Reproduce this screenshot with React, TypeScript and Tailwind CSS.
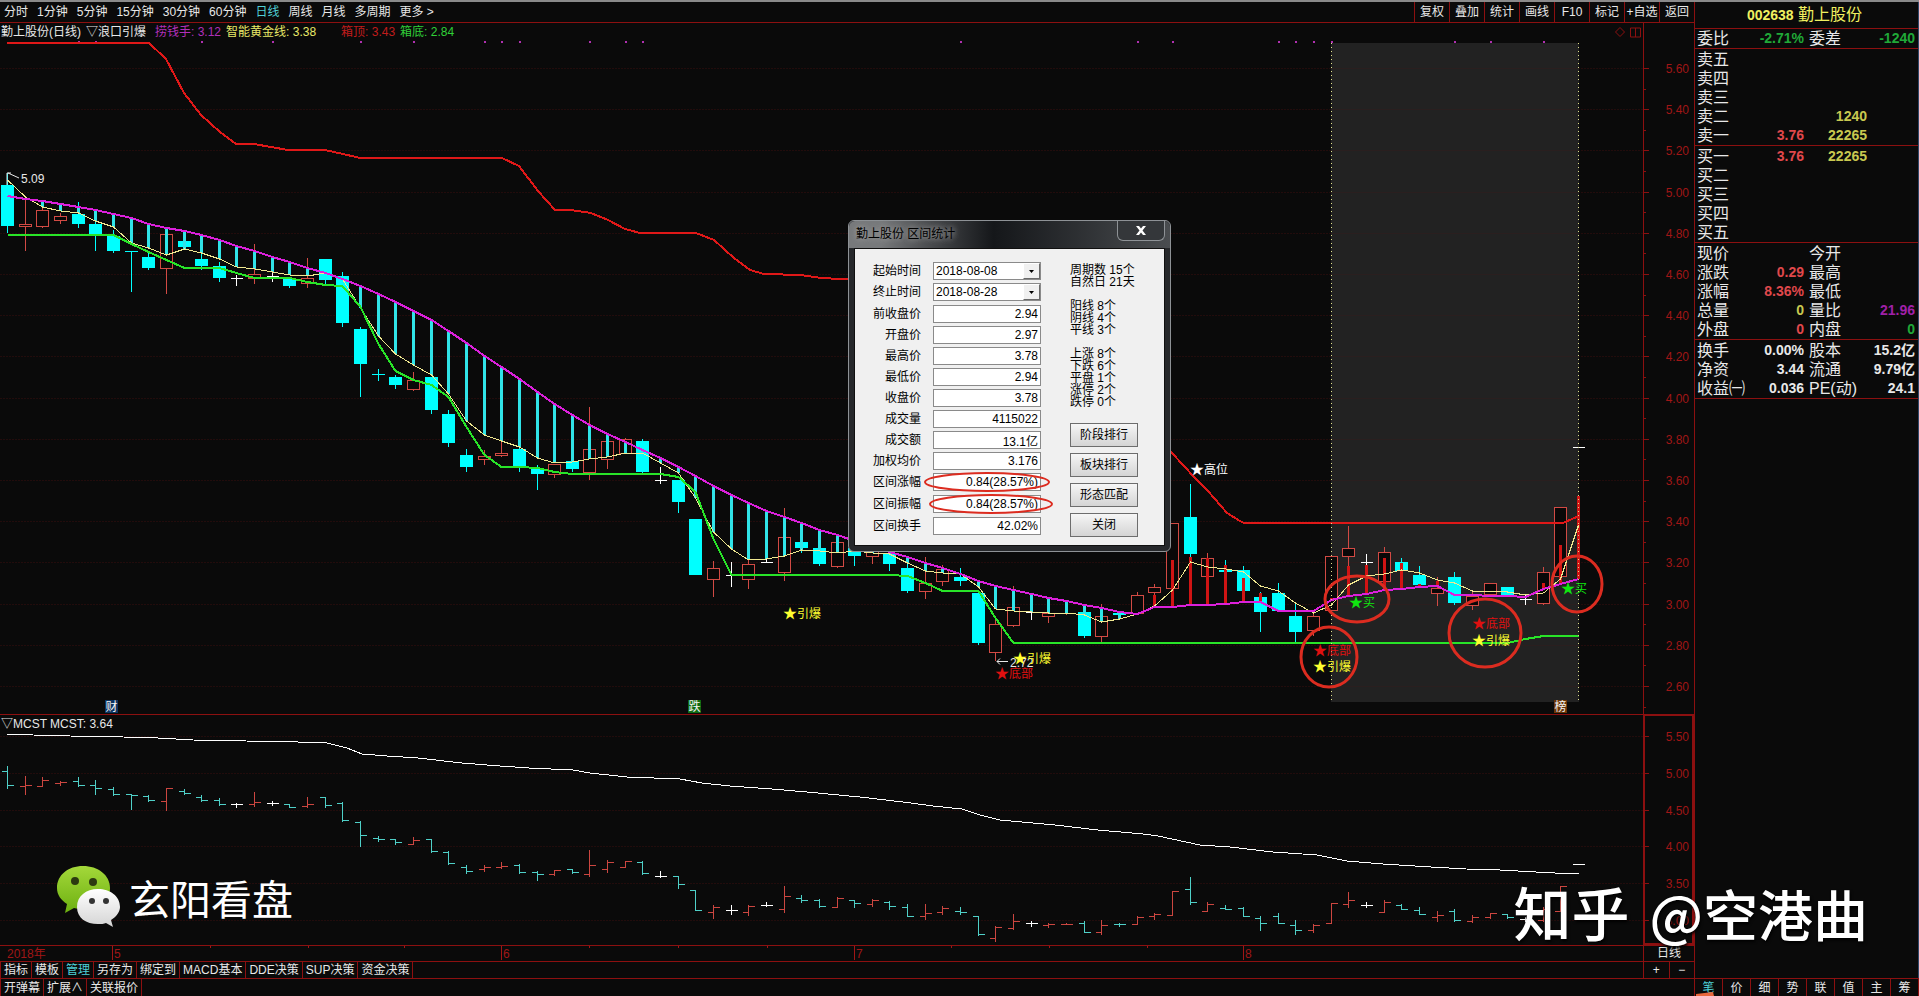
import { Fragment } from 'react/jsx-runtime';

type Kind = 'up' | 'down' | 'flat';
type Candle = [Kind, number, number, number, number];

// kind, body top, body bottom, high, low (in chart units)
const CANDLES: Candle[] = [
  ['down', 185, 226, 173, 233], ['up', 224, 227, 200, 251], ['up', 210, 227, 204, 228], ['up', 216, 221, 213, 224],
  ['down', 214, 224, 202, 228], ['down', 224, 235, 210, 251], ['down', 236, 251, 230, 253], ['down', 251, 252, 251, 292],
  ['down', 257, 268, 252, 270], ['up', 234, 269, 234, 294], ['down', 241, 247, 237, 250], ['down', 259, 266, 254, 270],
  ['down', 266, 278, 262, 282], ['flat', 278, 278, 275, 286], ['up', 274, 279, 244, 284], ['flat', 276, 276, 271, 282],
  ['down', 279, 286, 279, 288], ['up', 278, 284, 258, 288], ['down', 259, 280, 259, 286], ['down', 276, 323, 272, 327],
  ['down', 329, 364, 327, 397], ['down', 374, 375, 369, 381], ['down', 377, 385, 375, 389], ['up', 380, 390, 372, 391],
  ['down', 377, 410, 377, 414], ['down', 414, 443, 410, 447], ['down', 455, 467, 449, 472], ['up', 456, 460, 450, 465],
  ['up', 453, 456, 441, 457], ['down', 449, 468, 447, 472], ['down', 469, 474, 465, 490], ['up', 464, 475, 464, 478],
  ['down', 461, 469, 461, 472], ['up', 449, 473, 407, 480], ['up', 441, 460, 436, 469], ['up', 439, 454, 438, 454],
  ['down', 441, 472, 439, 475], ['flat', 480, 480, 467, 484], ['down', 480, 502, 480, 513], ['down', 519, 575, 519, 575],
  ['up', 568, 580, 561, 597], ['flat', 575, 575, 562, 587], ['up', 564, 580, 560, 589], ['flat', 562, 562, 553, 563],
  ['up', 537, 573, 508, 581], ['down', 542, 548, 533, 553], ['down', 548, 564, 545, 566], ['up', 542, 567, 540, 568],
  ['down', 548, 556, 546, 566], ['up', 547, 557, 544, 564], ['down', 553, 564, 550, 571], ['down', 568, 591, 557, 593],
  ['up', 583, 592, 557, 599], ['up', 569, 582, 565, 586], ['down', 577, 581, 568, 586], ['down', 593, 643, 591, 645],
  ['up', 624, 653, 619, 661], ['up', 607, 626, 586, 627], ['flat', 612, 612, 607, 620], ['up', 613, 617, 611, 623],
  ['up', 613, 614, 612, 615], ['down', 612, 636, 605, 638], ['up', 616, 637, 604, 642], ['down', 613, 615, 611, 620],
  ['up', 595, 614, 592, 615], ['up', 587, 593, 584, 600], ['up', 523, 589, 523, 590], ['down', 517, 554, 484, 557],
  ['up', 558, 577, 553, 579], ['down', 570, 572, 560, 572], ['down', 570, 591, 566, 592], ['down', 597, 612, 592, 632],
  ['down', 593, 611, 583, 612], ['down', 616, 632, 604, 642], ['up', 616, 631, 614, 636], ['up', 556, 611, 556, 611],
  ['up', 548, 557, 526, 566], ['flat', 562, 562, 554, 566], ['up', 552, 582, 547, 582], ['down', 562, 571, 558, 571],
  ['down', 575, 585, 566, 585], ['up', 588, 594, 577, 606], ['down', 577, 603, 572, 605], ['up', 596, 606, 590, 610],
  ['up', 583, 595, 583, 597], ['down', 587, 596, 587, 597], ['flat', 599, 599, 594, 605], ['up', 572, 604, 567, 605],
  ['up', 507, 577, 507, 577], ['flat', 447, 447, 447, 447],
];

const SLOW = [
  196, 199, 201, 204, 207, 210, 214, 218, 224, 228, 231, 235, 240, 246, 251, 257, 262, 268, 273, 279, 286, 294, 302,
  311, 320, 331, 343, 356, 367, 379, 392, 404, 415, 425, 434, 442, 450, 458, 467, 476, 486, 495, 503, 511, 517, 523,
  530, 535, 541, 546, 552, 557, 563, 568, 574, 581, 586, 590, 594, 598, 601, 605, 608, 612, 614, 607, 607, 605, 605,
  604, 602, 602, 611, 611, 611, 600, 596, 594, 590, 589, 587, 586, 595, 595, 596, 596, 597, 589, 584, 579,
];

const FAST = [
  180, 197, 207, 211, 213, 221, 227, 243, 248, 255, 249, 253, 259, 267, 269, 272, 275, 276, 273, 279, 308, 336, 354,
  365, 375, 394, 421, 435, 441, 447, 458, 463, 462, 459, 457, 453, 453, 463, 473, 498, 532, 549, 560, 559, 556, 550,
  551, 553, 551, 553, 554, 563, 571, 573, 574, 587, 609, 611, 612, 613, 613, 615, 622, 619, 614, 606, 590, 562, 567,
  569, 572, 586, 591, 603, 613, 605, 585, 576, 574, 570, 573, 580, 583, 591, 591, 592, 595, 593, 579, 525,
];

const FLOOR = [
  235, 235, 235, 235, 235, 235, 235, 244, 252, 260, 268, 268, 268, 273, 278, 278, 278, 282, 285, 286, 307, 344, 371,
  380, 385, 397, 427, 455, 467, 467, 468, 472, 474, 474, 474, 474, 474, 474, 477, 492, 539, 575, 575, 575, 575, 575,
  575, 575, 575, 575, 575, 576, 583, 591, 591, 591, 618, 643, 643, 643, 643, 643, 643, 643, 643, 643, 643, 643, 643,
  643, 643, 643, 643, 643, 643, 643, 643, 643, 643, 643, 643, 643, 643, 643, 643, 643, 639, 636, 636, 636,
];

const RED_STICKS: Record<number, number> = {
  65: 595, 66: 560, 67: 557, 68: 558, 69: 565, 70: 578, 71: 593, 75: 598, 76: 566, 77: 565, 78: 558, 79: 563, 80: 584,
  81: 581, 87: 583, 88: 545, 89: 496,
};

const SIGNAL_DOTS = [4, 5, 11, 15, 20, 23, 27, 28, 29, 33, 35, 36, 54, 64, 66, 72, 73, 74, 75, 82, 84, 87];

const CEILING_LEFT =
  '7,43 149,43 166,59 184,93 201,115 220,132 236,144 254,144 288,150 325,150 343,154 360,158 502,158 519,166 538,191 555,210 571,210 591,213 608,220 625,229 640,233 696,233 714,240 734,258 750,270 764,274 801,275 821,278 860,280';
const CEILING_RIGHT = '1155,434 1172,453 1195,478 1208,491 1227,513 1240,521 1244,523 1563,523 1579,516';

const MCST =
  '7,734 33,735 70,736 123,737 158,738 193,740 246,741 298,742 327,743 347,748 362,754 387,756 418,758 462,763 500,766 529,768 573,770 590,773 627,777 680,779 702,783 730,786 772,789 807,792 860,797 903,802 933,806 962,809 980,815 1000,820 1055,825 1098,830 1143,834 1158,836 1200,845 1230,847 1273,852 1317,855 1347,861 1383,864 1431,867 1466,869 1500,870 1536,872 1555,873 1579,873';

const COLORS: Record<Kind, string> = { up: '#d24a44', down: '#00ffff', flat: '#ffffff' };
const SUB_COLORS: Record<Kind, string> = { up: '#cc4640', down: '#4fd0c8', flat: '#ffffff' };

const barX = (i: number) => Math.floor(7.5 + 17.65 * i) + 0.5;
const priceY = (price: number) => Math.round(68 + (5.6 - price) * 206) + 0.5;
const subY = (y: number) => Math.round(729 + (y - 68.5) * 0.3573) + 0.5;
const toPoints = (values: number[]) => values.map((y, i) => `${barX(i)},${y}`).join(' ');

const PRICES = Array.from({ length: 16 }, (_, i) => 5.6 - i * 0.2);
const SUB_PRICES = [5.5, 5, 4.5, 4, 3.5, 3];

const MARKS: [string, number, number, string][] = [
  ['引爆', 784, 618, '#ffff30'],
  ['底部', 996, 678, '#e01010'],
  ['引爆', 1014, 663, '#ffff30'],
  ['高位', 1191, 474, '#ffffff'],
  ['买', 1350, 607, '#10e810'],
  ['底部', 1314, 655, '#e01010'],
  ['引爆', 1314, 671, '#ffff30'],
  ['底部', 1473, 628, '#e01010'],
  ['引爆', 1473, 645, '#ffff30'],
  ['买', 1562, 593, '#10e810'],
];

const RINGS = [
  [1357, 599, 32, 23],
  [1329, 657, 28, 30],
  [1485, 633, 36, 34],
  [1577, 584, 25, 28],
];

const BADGES: [string, number, string][] = [
  ['财', 105, '#0c3360'],
  ['跌', 688, '#0f6a12'],
  ['榜', 1554, '#6a3508'],
];

const PriceChart = () => (
  <svg viewBox="0 41 1694 673" className="block h-auto w-full" fontSize="12">
    {PRICES.map((price, i) => (
      <Fragment key={i}>
        <line x1="0" x2="1643" y1={priceY(price)} y2={priceY(price)} stroke="#220c0c" strokeDasharray="2 1" />
        <line x1="1643" x2="1649" y1={priceY(price)} y2={priceY(price)} stroke="#8c1010" />
        <line x1="1643" x2="1646" y1={priceY(price - 0.1)} y2={priceY(price - 0.1)} stroke="#8c1010" />
        <text x="1689" y={priceY(price) + 4} textAnchor="end" fill="#a01616">
          {price.toFixed(2)}
        </text>
      </Fragment>
    ))}
    <line x1="1643.5" x2="1643.5" y1="41" y2="714" stroke="#8c1010" />

    {/* Selected range */}
    <rect x="1331" y="43" width="248" height="659" fill="#222222" />
    {PRICES.map((price, i) => (
      <line key={i} x1="1332" x2="1578" y1={priceY(price)} y2={priceY(price)} stroke="#2a1f1f" />
    ))}

    {SIGNAL_DOTS.map((i) => (
      <rect key={i} x={barX(i) - 0.5} y="41" width="2" height="2" fill="#b030b0" />
    ))}

    {/* Candles */}
    <g shapeRendering="crispEdges">
      {CANDLES.map(([kind, top, bottom, high, low], i) => {
        const x = barX(i);
        const color = COLORS[kind];
        return (
          <Fragment key={i}>
            {low > high && <line x1={x} x2={x} y1={high} y2={low} stroke={color} />}
            {kind === 'flat' && <line x1={x - 6} x2={x + 6} y1={top + 0.5} y2={top + 0.5} stroke={color} />}
            {kind === 'down' && <rect x={x - 6.5} y={top} width="13" height={bottom - top} fill={color} />}
            {kind === 'up' && (
              <rect x={x - 6} y={top + 0.5} width="12" height={bottom - top - 1} fill="#0a0808" stroke={color} />
            )}
          </Fragment>
        );
      })}
      {SLOW.map((slow, i) => {
        const red = RED_STICKS[i];
        if (red) return <rect key={i} x={barX(i) - 1.5} y={red} width="3" height={slow - red} fill="#d01414" />;
        const fast = FAST[i];
        if (fast <= slow) return null;
        return <rect key={i} x={barX(i) - 1.5} y={slow} width="3" height={fast - slow} fill="#30e4e8" />;
      })}
    </g>

    {/* Indicator lines */}
    <g fill="none" shapeRendering="crispEdges">
      <polyline points={toPoints(FAST)} stroke="#f0e890" />
      <g strokeWidth="2">
        <polyline points={toPoints(SLOW)} stroke="#dc20dc" />
        <polyline points={toPoints(FLOOR)} stroke="#28e428" />
        <polyline points={CEILING_LEFT} stroke="#e01818" />
        <polyline points={CEILING_RIGHT} stroke="#e01818" />
      </g>
    </g>

    <line x1="1331.5" x2="1331.5" y1="43" y2="702" stroke="#e0e08c" strokeDasharray="1 3" />
    <line x1="1578.5" x2="1578.5" y1="43" y2="702" stroke="#e0e08c" strokeDasharray="1 3" />

    {/* High and low callouts */}
    <path d="M7 173v12M7 173h4M8 173l11 5" fill="none" stroke="#e8e8e8" />
    <text x="21" y="183" fill="#e8e8e8">
      5.09
    </text>
    <path d="M1008 661.500h-11m3-3l-3 3l3 3" fill="none" stroke="#e8e8e8" />
    <text x="1010" y="667" fill="#e8e8e8">
      2.72
    </text>

    {MARKS.map(([label, x, y, color], i) => (
      <text key={i} x={x - 1} y={y} fill={color}>
        <tspan fontSize="14">★</tspan>
        {label}
      </text>
    ))}
    {RINGS.map(([cx, cy, rx, ry], i) => (
      <ellipse key={i} cx={cx} cy={cy} rx={rx} ry={ry} fill="none" stroke="#dc2c20" strokeWidth="3" />
    ))}
    {BADGES.map(([label, x, color]) => (
      <Fragment key={label}>
        <rect x={x} y="700" width="13" height="13" fill={color} />
        <text x={x + 0.5} y="711" fill="#f4f4f4">
          {label}
        </text>
      </Fragment>
    ))}
  </svg>
);

const CostChart = () => (
  <svg viewBox="0 733 1694 212" className="block h-auto w-full overflow-visible" fontSize="12">
    {SUB_PRICES.map((price) => {
      const y = Math.round(736 + (5.5 - price) * 73.6) + 0.5;
      return (
        <Fragment key={price}>
          <line x1="0" x2="1643" y1={y} y2={y} stroke="#220c0c" strokeDasharray="2 1" />
          <line x1="1645" x2="1649" y1={y} y2={y} stroke="#8c1010" />
          <text x="1689" y={y + 4} textAnchor="end" fill="#a01616">
            {price.toFixed(2)}
          </text>
        </Fragment>
      );
    })}
    <path d="M1644 733v211h49v-211" fill="none" stroke="#8c1010" strokeWidth="2" />
    <g shapeRendering="crispEdges" fill="none">
      <polyline points={MCST} stroke="#ffffff" />
      {CANDLES.map(([kind, top, bottom, high, low], i) => {
        const x = barX(i);
        const open = subY(kind === 'up' ? bottom : top);
        const close = subY(kind === 'up' ? top : bottom);
        return (
          <path
            key={i}
            d={`M${x - 6} ${open}H${x}M${x} ${close}H${x + 6}M${x} ${subY(high) - 0.5}V${subY(low) + 0.5}`}
            stroke={SUB_COLORS[kind]}
          />
        );
      })}
    </g>
  </svg>
);

const MONTHS: [string, number][] = [
  ['5', 112],
  ['6', 501],
  ['7', 854],
  ['8', 1243],
];

const DateAxis = () => (
  <svg viewBox="0 946 1643 15" className="block h-auto min-w-0 flex-1" fontSize="12" fill="#a01616">
    <text x="7" y="958">
      2018年
    </text>
    {MONTHS.map(([month, x]) => (
      <Fragment key={month}>
        <rect x={x} y="946" width="1" height="14" />
        <text x={x + 2} y="958">
          {month}
        </text>
      </Fragment>
    ))}
    {[210, 308, 404, 589, 678, 767, 951, 1049, 1147].map((x) => (
      <rect key={x} x={x} y="946" width="1" height="2" />
    ))}
  </svg>
);

const PERIODS = ['分时', '1分钟', '5分钟', '15分钟', '30分钟', '60分钟', '日线', '周线', '月线', '多周期', '更多 >'];
const TOOLS = ['复权', '叠加', '统计', '画线', 'F10', '标记', '+自选', '返回'];

const Toolbar = () => (
  <nav className="flex h-[21px] items-stretch justify-between border-b border-[#8c1010] pl-1">
    <div className="flex gap-[9px]">
      {PERIODS.map((period) => (
        <button key={period} className={period === '日线' ? 'text-[#4fd0d8]' : ''}>
          {period}
        </button>
      ))}
    </div>
    <div className="flex">
      {TOOLS.map((tool) => (
        <button key={tool} className="w-[35px] border-l border-[#8c1010] whitespace-nowrap">
          {tool}
        </button>
      ))}
    </div>
  </nav>
);

const INDICATORS = ['指标', '模板', '管理', '另存为', '绑定到', 'MACD基本', 'DDE决策', 'SUP决策', '资金决策'];
const EXTRAS = ['开弹幕', '扩展∧', '关联报价'];
const SIDE_TABS = ['笔', '价', '细', '势', '联', '值', '主', '筹'];

const TabStrip = ({ tabs }: { tabs: string[] }) => (
  <div className="flex border-l border-[#8c1010]">
    {tabs.map((tab) => (
      <button
        key={tab}
        className={`border-r border-[#8c1010] px-[3px] whitespace-nowrap ${tab === '管理' ? 'text-[#4fd0d8]' : ''}`}
      >
        {tab}
      </button>
    ))}
  </div>
);

const ASKS = [
  ['卖五', '', ''],
  ['卖四', '', ''],
  ['卖三', '', ''],
  ['卖二', '', '1240'],
  ['卖一', '3.76', '22265'],
];
const BIDS = [
  ['买一', '3.76', '22265'],
  ['买二', '', ''],
  ['买三', '', ''],
  ['买四', '', ''],
  ['买五', '', ''],
];

const OrderTable = ({ rows }: { rows: string[][] }) => (
  <table className="w-full table-fixed">
    <tbody>
      {rows.map(([label, price, volume]) => (
        <tr key={label} className="h-[19px]">
          <th className="w-[50px] pl-[2px] text-left text-[16px] font-normal">{label}</th>
          <td className="w-[59px] text-right text-[#e0484c]">{price}</td>
          <td className="w-[63px] text-right text-[#c8c850]">{volume}</td>
          <td />
        </tr>
      ))}
    </tbody>
  </table>
);

type Quote = [string, string, string, string, string, string];

const RATIO: Quote[] = [['委比', '-2.71%', 'text-[#20a838]', '委差', '-1240', 'text-[#20a838]']];
const QUOTES: Quote[] = [
  ['现价', '', '', '今开', '', ''],
  ['涨跌', '0.29', 'text-[#e0484c]', '最高', '', ''],
  ['涨幅', '8.36%', 'text-[#e0484c]', '最低', '', ''],
  ['总量', '0', 'text-[#c8c850]', '量比', '21.96', 'text-[#a020a8]'],
  ['外盘', '0', 'text-[#e0484c]', '内盘', '0', 'text-[#20a838]'],
];
const BASICS: Quote[] = [
  ['换手', '0.00%', '', '股本', '15.2亿', ''],
  ['净资', '3.44', '', '流通', '9.79亿', ''],
  ['收益㈠', '0.036', '', 'PE(动)', '24.1', ''],
];

const QuoteTable = ({ rows }: { rows: Quote[] }) => (
  <table className="w-full table-fixed">
    <tbody>
      {rows.map(([label, value, color, label2, value2, color2]) => (
        <tr key={label} className="h-[19px]">
          <th className="w-[50px] pl-[2px] text-left text-[16px] font-normal whitespace-nowrap">{label}</th>
          <td className={`w-[59px] text-right ${color}`}>{value}</td>
          <th className="w-[53px] pl-[5px] text-left text-[16px] font-normal whitespace-nowrap">{label2}</th>
          <td className={`pr-[3px] text-right ${color2}`}>{value2}</td>
        </tr>
      ))}
    </tbody>
  </table>
);

const QuotePanel = () => (
  <aside className="w-[225px] shrink-0 border-r border-l border-r-[#30486a] border-l-[#8c1010] text-[14px] leading-[19px] font-bold">
    <h1 className="h-[27px] border-b border-[#8c1010] pr-1 text-center text-[16px] leading-[26px] font-normal text-[#f0f060]">
      <span className="text-[14px] font-bold">002638</span> 勤上股份
    </h1>
    <div className="border-b border-[#8c1010]">
      <QuoteTable rows={RATIO} />
    </div>
    <div className="border-b border-[#8c1010] pt-px">
      <OrderTable rows={ASKS} />
    </div>
    <div className="border-b border-[#8c1010] pt-px">
      <OrderTable rows={BIDS} />
    </div>
    <div className="border-b border-[#8c1010] pt-px">
      <QuoteTable rows={QUOTES} />
    </div>
    <div className="border-b border-[#8c1010] pt-px">
      <QuoteTable rows={BASICS} />
    </div>
  </aside>
);

const FIELDS: [string, string][][] = [
  [
    ['前收盘价', '2.94'],
    ['开盘价', '2.97'],
    ['最高价', '3.78'],
    ['最低价', '2.94'],
    ['收盘价', '3.78'],
    ['成交量', '4115022'],
    ['成交额', '13.1亿'],
    ['加权均价', '3.176'],
    ['区间涨幅', '0.84(28.57%)'],
  ],
  [['区间振幅', '0.84(28.57%)']],
  [['区间换手', '42.02%']],
];

const COUNTS = [
  ['周期数 15个', '自然日 21天'],
  ['阳线 8个', '阴线 4个', '平线 3个'],
  ['上涨 8个', '下跌 6个', '平盘 1个', '涨停 2个', '跌停 0个'],
];

const DateField = ({ label, value }: { label: string; value: string }) => (
  <label className="flex items-center justify-end gap-3">
    {label}
    <span className="relative h-[18px] w-[108px]">
      <select
        defaultValue={value}
        className="block h-full w-full appearance-none border border-[#8a8a8a] bg-white pl-[2px] leading-4 text-black"
      >
        <option>{value}</option>
      </select>
      <span className="pointer-events-none absolute top-px right-px flex h-4 w-[17px] items-center justify-center border border-t-white border-r-[#6a6a6a] border-b-[#6a6a6a] border-l-white bg-[#f0f0f0]">
        <svg viewBox="0 0 5 3" className="h-[3px] w-[5px]">
          <path d="M0 0h5L2.500 3z" fill="#000" />
        </svg>
      </span>
    </span>
  </label>
);

const RangeDialog = () => (
  <section
    role="dialog"
    aria-label="区间统计"
    className="absolute top-[218px] left-[848px] w-[323px] rounded-md border border-[#8e9296] bg-[#26282b] px-[5px] pb-[5px] text-black"
  >
    <header className="-mx-[5px] flex h-[27px] items-start justify-between rounded-t-md bg-linear-to-r from-[#77797b] from-10% via-[#15171a] via-45% to-[#4a4d50] pr-[5px] pl-[7px]">
      <h2 className="leading-[26px] [text-shadow:0_0_6px_#a0a0a0,0_0_6px_#909090]">勤上股份 区间统计</h2>
      <button
        aria-label="关闭窗口"
        className="flex h-5 w-12 items-center justify-center rounded-b-md border border-t-0 border-[#8e9296] bg-[#34373a]"
      >
        <svg viewBox="0 0 10 9" className="h-[9px] w-[10px]">
          <path d="M0 0h3l2 2.500L7 0h3L6.500 4.500L10 9H7L5 6.500L3 9H0l3.500-4.500z" fill="#fff" />
        </svg>
      </button>
    </header>
    <div className="flex border border-[#101010] bg-[#f0f0f0] pt-[13px] pb-2 pl-[18px]">
      <form className="flex w-[168px] flex-col gap-1">
        <div className="flex flex-col gap-[3px]">
          <DateField label="起始时间" value="2018-08-08" />
          <DateField label="终止时间" value="2018-08-28" />
        </div>
        {FIELDS.map((group, i) => (
          <div key={i} className="flex flex-col gap-[3px]">
            {group.map(([label, value]) => (
              <label key={label} className="flex items-center justify-end gap-3">
                {label}
                <input
                  readOnly
                  defaultValue={value}
                  className="h-[18px] w-[108px] border border-[#8a8a8a] bg-white pr-[2px] text-right"
                />
              </label>
            ))}
          </div>
        ))}
      </form>
      <div className="ml-[29px] flex flex-col">
        <div className="flex flex-col gap-3 pt-[2px] leading-3">
          {COUNTS.map((group, i) => (
            <ul key={i}>
              {group.map((line) => (
                <li key={line}>{line}</li>
              ))}
            </ul>
          ))}
        </div>
        <div className="mt-[15px] flex flex-col gap-[6px]">
          {['阶段排行', '板块排行', '形态匹配', '关闭'].map((action) => (
            <button
              key={action}
              className="h-6 w-[68px] border border-[#6d6d6d] bg-linear-to-b from-[#f6f6f6] to-[#d4d4d4]"
            >
              {action}
            </button>
          ))}
        </div>
      </div>
    </div>
    <svg viewBox="0 0 323 332" className="pointer-events-none absolute -top-px -left-px h-[332px] w-[323px]">
      <ellipse cx="139" cy="262" rx="62" ry="9" fill="none" stroke="#dc2c20" strokeWidth="2" />
      <ellipse cx="143" cy="284" rx="61" ry="9" fill="none" stroke="#dc2c20" strokeWidth="2" />
    </svg>
  </section>
);

const WechatMark = () => (
  <div className="absolute bottom-[69px] left-[57px] flex items-end gap-[9px]">
    <svg viewBox="0 0 63 61" className="h-[61px] w-[63px]">
      <defs>
        <linearGradient id="leaf" x1="0" y1="0" x2="0" y2="1">
          <stop offset="0" stopColor="#a4d83a" />
          <stop offset="1" stopColor="#6cb010" />
        </linearGradient>
        <linearGradient id="pearl" x1="0" y1="0" x2="0" y2="1">
          <stop offset="0" stopColor="#ffffff" />
          <stop offset="1" stopColor="#d4d4d4" />
        </linearGradient>
      </defs>
      <path d="M26 0C11 0 0 9 0 22c0 7 4 12 10 16l-2 9 9-5c3 1 6 1 9 1 15 0 27-8 27-21S41 0 26 0z" fill="url(#leaf)" />
      <circle cx="18" cy="15" r="4" fill="#2c3a10" />
      <circle cx="36" cy="16" r="4" fill="#2c3a10" />
      <path
        d="M41 23c-12 0-21 7-21 18s9 17 21 17c3 0 6 0 8-1l7 4-2-7c5-3 9-8 9-13 0-11-10-18-22-18z"
        fill="url(#pearl)"
      />
      <circle cx="35" cy="35" r="3" fill="#333" />
      <circle cx="49" cy="35" r="3" fill="#333" />
    </svg>
    <span className="text-[41px] leading-[52px] text-white">玄阳看盘</span>
  </div>
);

const ZhihuMark = () => (
  <div className="absolute right-[51px] bottom-12 flex items-end gap-5 font-medium text-white [text-shadow:1px_2px_3px_#000]">
    <span className="text-[58px] leading-[64px]">知乎</span>
    <span className="text-[55px] leading-[72px] font-['Noto_Sans_CJK_SC',sans-serif]">@空港曲</span>
  </div>
);

export default function App() {
  return (
    <div className="relative flex min-h-screen flex-col border-t-2 border-[#8a8a8a] bg-[#0a0a0a] font-['Liberation_Sans','Noto_Sans_CJK_SC',sans-serif] text-[12px] leading-4 text-[#e8e8e8]">
      <div className="flex flex-1">
        <main className="min-w-0 flex-1">
          <Toolbar />
          <div className="flex h-[18px] items-stretch justify-between leading-[18px]">
            <div className="flex gap-[5px] pl-px whitespace-nowrap">
              <span>勤上股份(日线)</span>
              <span>▽浪口引爆</span>
              <span className="ml-1 text-[#b030b8]">捞钱手: 3.12</span>
              <span className="text-[#e8e868]">智能黄金线: 3.38</span>
              <span className="ml-5 text-[#c01c1c]">箱顶: 3.43</span>
              <span className="text-[#30d038]">箱底: 2.84</span>
            </div>
            <div className="flex">
              <svg viewBox="0 0 28 18" className="h-[18px] w-7" fill="none" stroke="#8c1010">
                <path d="M5 4.500L9.500 9L5 13.500L.5 9zM15.500 5h10v9h-10zM20.500 5v9" />
              </svg>
              <div className="w-[51px] border-l border-[#8c1010]" />
            </div>
          </div>
          <PriceChart />
          <div className="flex h-[19px] justify-between border-t border-[#8c1010] leading-[18px]">
            <span className="pl-px">▽MCST MCST: 3.64</span>
            <div className="w-[51px] border-x-2 border-t border-[#8c1010]" />
          </div>
          <CostChart />
          <div className="flex items-stretch border-y border-[#8c1010]">
            <DateAxis />
            <button className="w-[51px] border-l border-[#8c1010] leading-[15px]">日线</button>
          </div>
          <div className="flex h-4 justify-between">
            <TabStrip tabs={INDICATORS} />
            <div className="flex w-[51px]">
              <button className="flex-1 border-l border-[#8c1010]">+</button>
              <button className="flex-1 border-l border-[#8c1010]">−</button>
            </div>
          </div>
        </main>
        <QuotePanel />
      </div>
      <footer className="flex h-[18px] justify-between border-t border-[#8c1010]">
        <TabStrip tabs={EXTRAS} />
        <div className="relative flex w-[225px] border-l border-[#8c1010]">
          {SIDE_TABS.map((tab) => (
            <button
              key={tab}
              className={`w-7 border-r border-[#8c1010] last:border-r-0 ${tab === '笔' ? 'text-[#4fd0d8]' : ''}`}
            >
              {tab}
            </button>
          ))}
          <svg viewBox="0 0 18 4" className="absolute bottom-0 left-px h-1 w-[18px]">
            <path d="M0 2L17 0l1 4H0z" fill="#e8663c" />
          </svg>
        </div>
      </footer>
      <RangeDialog />
      <WechatMark />
      <ZhihuMark />
    </div>
  );
}
